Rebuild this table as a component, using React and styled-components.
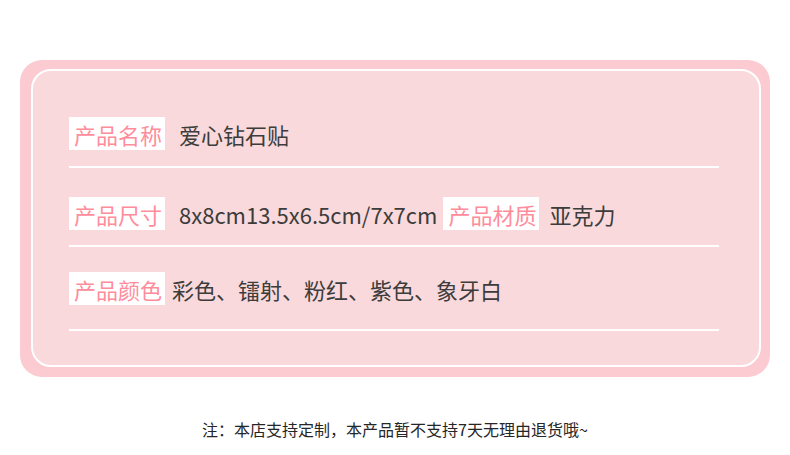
import React from 'react';
import styled, { createGlobalStyle } from 'styled-components';

const GlobalStyle = createGlobalStyle`
  body {
    margin: 0;
    background: #ffffff;
    font-family: 'Noto Sans CJK SC', 'Noto Sans', sans-serif;
  }
`;

const Page = styled.div`
  width: 790px;
  height: 455px;
  box-sizing: border-box;
  padding-top: 60px;
`;

const OuterCard = styled.div`
  margin-left: 20px;
  width: 750px;
  height: 317px;
  box-sizing: border-box;
  padding: 9px 9px 10px 11px;
  background-color: #fccbd2;
  border-radius: 22px;
`;

const InnerCard = styled.div`
  height: 100%;
  box-sizing: border-box;
  border: 2px solid #ffffff;
  border-radius: 20px;
  background-color: #f9d9db;
  padding: 0 40px 0 36px;
`;

const Row = styled.div`
  padding-top: ${(p) => p.$top}px;
  padding-bottom: ${(p) => p.$bottom}px;
  border-bottom: 2px solid #ffffff;
`;

const RowContent = styled.div`
  display: flex;
  align-items: center;
  height: 33px;
`;

const Label = styled.span`
  display: inline-flex;
  align-items: center;
  height: 33px;
  padding: 0 3px 0 5px;
  background-color: #ffffff;
  color: #ff8c9b;
  font-size: 22px;
  white-space: nowrap;
`;

const Value = styled.span`
  margin-left: ${(p) => p.$gap}px;
  margin-right: ${(p) => p.$after || 0}px;
  color: #3c3c3c;
  font-size: 22px;
  white-space: nowrap;
`;

const Note = styled.p`
  margin: 40px 0 0;
  text-align: center;
  color: #262626;
  font-size: 16px;
`;

export default function App() {
  return (
    <>
      <GlobalStyle />
      <Page>
        <OuterCard>
          <InnerCard>
            <Row $top={46} $bottom={16}>
              <RowContent>
                <Label>产品名称</Label>
                <Value $gap={14}>爱心钻石贴</Value>
              </RowContent>
            </Row>
            <Row $top={29} $bottom={15}>
              <RowContent>
                <Label>产品尺寸</Label>
                <Value $gap={14} $after={6}>8x8cm13.5x6.5cm/7x7cm</Value>
                <Label>产品材质</Label>
                <Value $gap={10}>亚克力</Value>
              </RowContent>
            </Row>
            <Row $top={25} $bottom={24}>
              <RowContent>
                <Label>产品颜色</Label>
                <Value $gap={7}>彩色、镭射、粉红、紫色、象牙白</Value>
              </RowContent>
            </Row>
          </InnerCard>
        </OuterCard>
        <Note>注：本店支持定制，本产品暂不支持7天无理由退货哦~</Note>
      </Page>
    </>
  );
}
